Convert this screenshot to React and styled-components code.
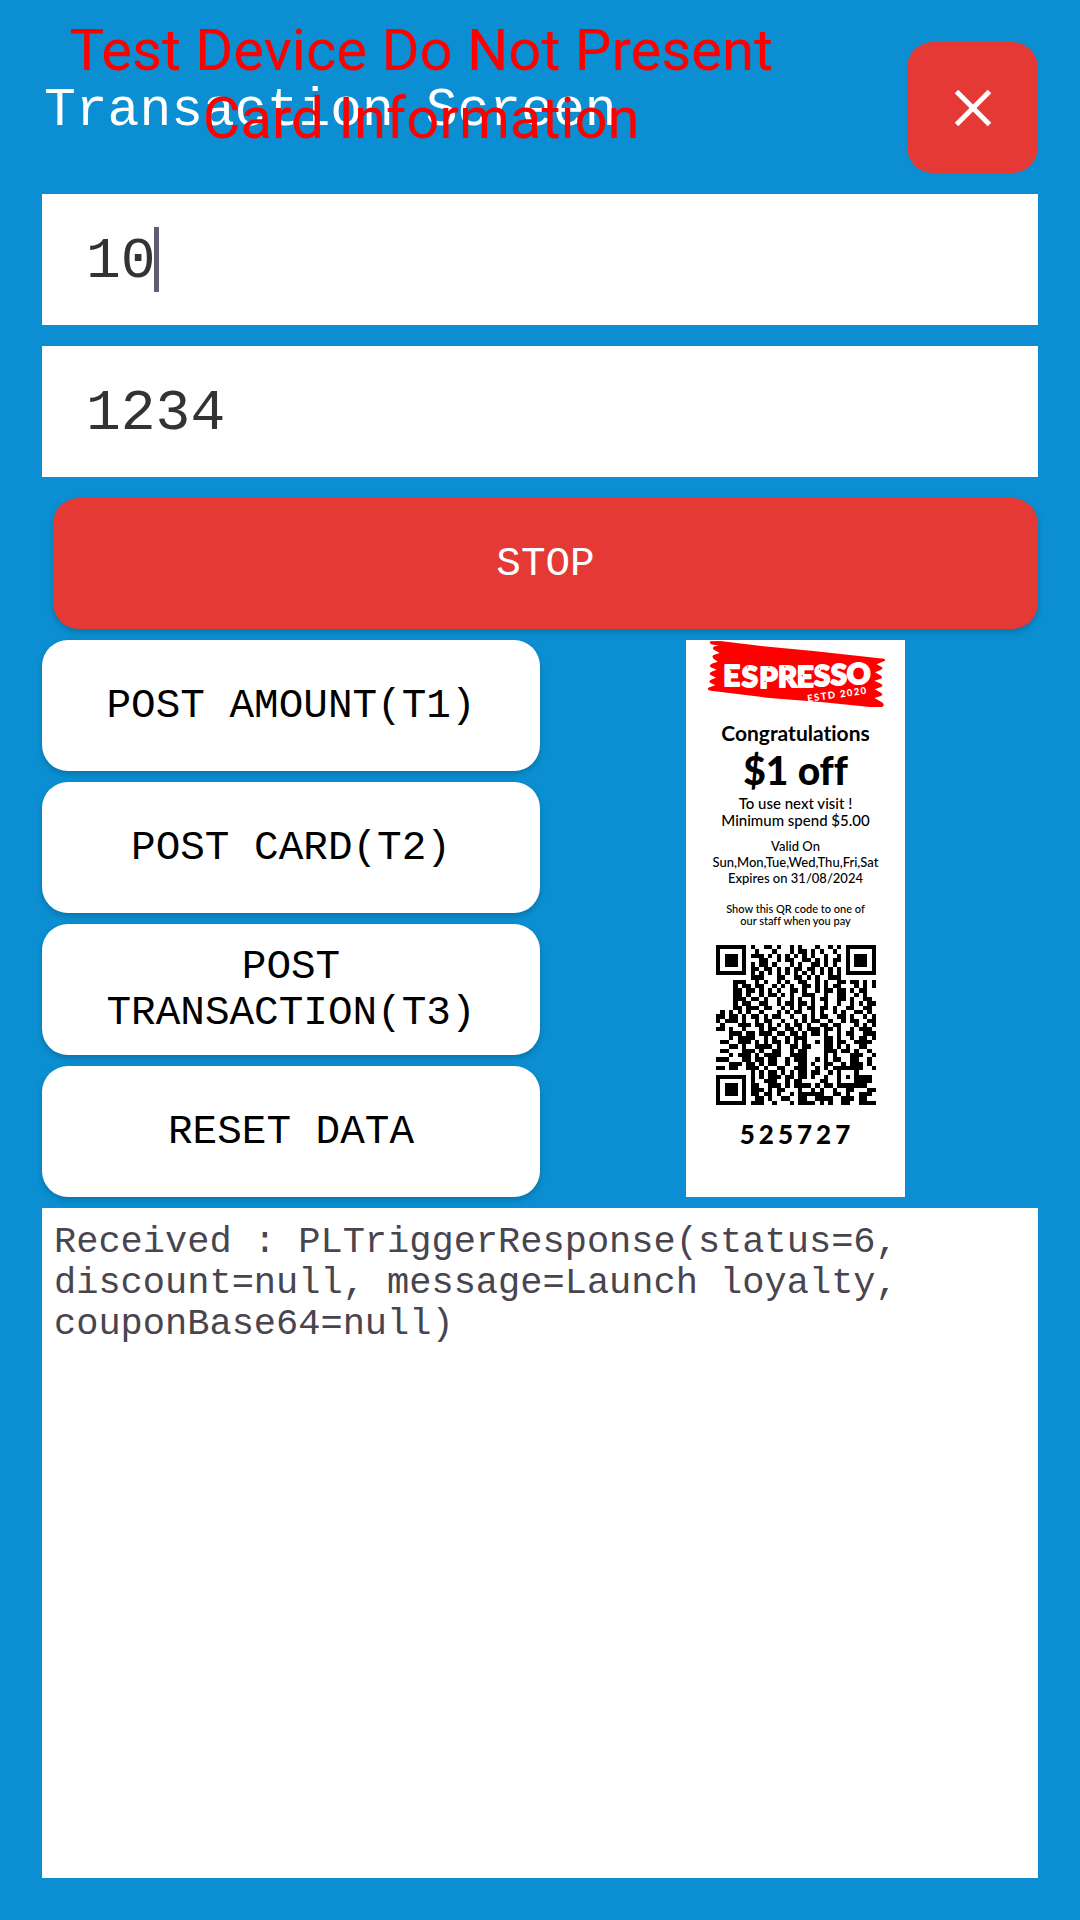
import React from "react";
import styled, { createGlobalStyle } from "styled-components";

const mono = `"Liberation Mono", "Courier New", monospace`;
const blue = "#0b8fd2";
const red = "#e53935";

const GlobalStyle = createGlobalStyle`
  *, *::before, *::after { box-sizing: border-box; }
  body { margin: 0; background: ${blue}; }
  h1, h2, p { margin: 0; font-weight: 400; }
  button, input { font: inherit; border: 0; outline: 0; }
`;

const Screen = styled.main`
  position: relative;
  display: flex;
  flex-direction: column;
  gap: 11px;
  min-height: 100vh;
  padding: 42px;
  background: ${blue};
  font-family: ${mono};
`;

const Watermark = styled.p`
  position: absolute;
  top: 16px;
  left: 0;
  width: 78%;
  padding: 0 40px;
  color: #ff0000;
  font-family: Roboto, sans-serif;
  font-size: 58px;
  line-height: 68px;
  text-align: center;
  pointer-events: none;
`;

const Form = styled.form`
  display: flex;
  flex-direction: column;
  gap: 21px;
`;

const Header = styled.header`
  display: flex;
  align-items: center;
  justify-content: space-between;
`;

const Title = styled.h1`
  padding: 6px 0 0 2px;
  color: #fff;
  font-size: 53px;
  line-height: 60px;
`;

const CloseButton = styled.button`
  display: grid;
  place-items: center;
  width: 131px;
  height: 131px;
  padding: 0;
  border-radius: 26px;
  background: ${red};
  color: #fff;
`;

const Field = styled.div`
  position: relative;
  font-size: 58px;
`;

const TextInput = styled.input`
  display: block;
  width: 100%;
  height: 131px;
  padding: 4px 44px 0;
  border-radius: 0;
  background: #fff;
  color: #333;
  caret-color: transparent;
`;

const Caret = styled.span`
  position: absolute;
  top: 33px;
  left: calc(42px + 2ch);
  width: 5px;
  height: 65px;
  background: #625b71;
`;

const ActionButton = styled.button`
  height: 131px;
  padding: 0 60px;
  margin-left: ${(p) => (p.$stop ? "11px" : "0")};
  border-radius: 26px;
  background: ${(p) => (p.$stop ? red : "#fff")};
  color: ${(p) => (p.$stop ? "#fff" : "#000")};
  box-shadow: 0 3px 6px rgba(0, 0, 0, 0.2);
  font-size: 41px;
  line-height: 46px;
`;

const Middle = styled.div`
  display: grid;
  grid-template-columns: 1fr 1fr;
`;

const Actions = styled.div`
  display: flex;
  flex-direction: column;
  gap: 11px;
`;

const CouponCell = styled.div`
  display: flex;
  justify-content: center;
  padding-left: 13px;
`;

const Coupon = styled.section`
  display: flex;
  flex-direction: column;
  align-items: center;
  width: 219px;
  background: #fff;
  color: #000;
  font-family: Lato, sans-serif;
  font-variant-ligatures: none;
  text-align: center;
  white-space: nowrap;
`;

const Congrats = styled.h2`
  margin-top: 12px;
  font-size: 21px;
  font-weight: 700;
  line-height: 24px;
`;

const Offer = styled.p`
  font-size: 39px;
  font-weight: 900;
  line-height: 50px;
`;

const Lines = styled.p`
  margin-bottom: ${(p) => p.$after}px;
  font-size: ${(p) => p.$size}px;
  font-weight: 500;
  line-height: ${(p) => p.$line}px;
`;

const Code = styled.p`
  margin-top: 14px;
  padding-left: 3px;
  font-size: 26px;
  font-weight: 900;
  line-height: 30px;
  letter-spacing: 4px;
`;

const Log = styled.section`
  flex: 1;
  padding: 14px 12px;
  background: #fff;
  color: #49454f;
  font-size: 37px;
  line-height: 41px;
`;

const CloseIcon = () => (
  <svg width="38" height="38" viewBox="0 0 38 38" aria-hidden="true">
    <path d="M2.5 2.5 35.5 35.5M35.5 2.5 2.5 35.5" stroke="currentColor" strokeWidth="5" />
  </svg>
);

const Logo = () => (
  <svg width="180" height="69" viewBox="78 30 540 207" role="img" aria-label="Espresso">
    <path
      fill="#ff0000"
      d="M92 34 L120 33 L250 49 L400 63 L612 86 Q622 91 606 96 L590 103 L606 112 Q611 116 600 121 L585 127 L603 137 Q611 143 600 147 L583 152 L604 162 Q612 168 601 172 L584 178 L603 188 Q612 194 602 198 L583 204 L606 217 Q617 226 606 231 L570 231 L430 217 L260 203 L92 182 Q77 178 88 172 L106 166 L91 158 Q84 154 93 149 L108 143 L92 135 Q85 130 95 125 L110 119 L92 112 Q86 107 95 101 L113 95 L101 86 Q93 78 103 74 L119 69 L102 59 Q94 54 104 49 L117 47 L94 43 Q86 38 92 34Z"
    />
    <g fill="#fff" fontFamily="Lato, sans-serif" fontWeight="900">
      <text
        fontSize="88"
        stroke="#fff"
        strokeWidth="6"
        strokeLinejoin="round"
        x="130 185 238 294 350 402 452 500"
        y="168 171 173 171 172 168 165 162"
      >
        ESPRESSO
      </text>
      <text fontSize="29" letterSpacing="4" transform="rotate(-8 383 214)" x="383" y="216">
        ESTD 2020
      </text>
    </g>
    <g fill="#ff0000">
      <circle cx="151" cy="119" r="2" />
      <circle cx="203" cy="111" r="2" />
      <circle cx="216" cy="151" r="2" />
      <circle cx="267" cy="111" r="2" />
      <circle cx="255" cy="154" r="2" />
      <circle cx="315" cy="111" r="2" />
      <circle cx="327" cy="150" r="2" />
      <circle cx="367" cy="137" r="2" />
      <circle cx="418" cy="117" r="2" />
      <circle cx="475" cy="151" r="2" />
      <circle cx="545" cy="120" r="2" />
    </g>
  </svg>
);

// 37 x 37 modules; "#" is dark.
const QR = [
  "#######.#..##.#..#.#...#..#.##.######",
  "#.....#..#...#...#.##.#.#..#...#.....",
  "#.###.#.###.#.#.#.#.#.#..#..#..#.###.",
  "#.###.#...##..#.##..##.#.#.##..#.###.",
  "#.###.#.#.##.#...#.#..##.#.#...#.###.",
  "#.....#.##.##.#.#.##.##.#.#.#..#.....",
  "#######.#.#.#.#.#.#.#.#.#.#.#.#######",
  "........###...##..##.#.#..###........",
  "....###..#.#..#.#..##..#.#..##.##.#.#",
  "....#.##.##..#.#.#..##.#.#.##...#.#.#",
  "....##.##.#.#.#..##.#..#.##.##.#.##..",
  "....##.#..#.##.#.#..###..#..##..#.#..",
  "....###.##.#..#..#.#..#.##..##.#..##.",
  "....#.##..##..#.##.##.#..#..#..#.#.##",
  "....##.###.##..#.#.#.##.##.#..##..##.",
  ".#.#.#.#..#...#.#.##..#.#..#.#..##.#.",
  "##.##.#.##.#.##..#..#.#.##..##.#..#.#",
  "#.###.#..#.##..#..#.#.##..#..#.##..##",
  ".#...###.##.#.#.#.##.#..##.##...#.#.#",
  "##.#..#...#.##..##.#.###.##.#..#.###.",
  "...###.##.###.##.##.#.##.#..#.##..###",
  "...#.####..#.#..#.###....##.#..#.##.#",
  ".##..###.#.#.##.#.#.#..#.##.##..####.",
  "...##.#..####.#..##.##...##.#.#..##..",
  ".##...###.#..##..#.##....###.##.#..#.",
  "...#.###.#.####..####....#.#...###..#",
  "###...##.##.##..#.###..#.#.##..##..#.",
  "...###.##.#.##..#..##.#..##..#.###.#.",
  "##.##..###.#..##..###..#.#.##.#.##..#",
  "........#.#.##.#.#.##.##..#.#.#......",
  "#######.#.#.###.##.##.#..#..#...####.",
  "#.....#.#..###..#.##....##..#...####.",
  "#.###.#.##..###.#.####.#.##.#######..",
  "#.###.#.###.#.##...#..#.#..#..##...##",
  "#.###.#.##.##.#..#.######..##.#..###.",
  "#.....#..##.#..##..##..####..###.##..",
  "#######.###..#...#.####.#.#..##..####",
];

// The three corner finders and the alignment mark, as [column, row, size].
const MARKS = [
  [0, 0, 7],
  [30, 0, 7],
  [0, 30, 7],
  [28, 28, 5],
];

const QrCode = () => {
  let d = "";
  QR.forEach((row, y) => {
    [...row].forEach((cell, x) => {
      if (cell === "#") d += `M${x} ${y}h1v1h-1z`;
    });
  });
  return (
    <svg width="160" height="160" viewBox="0 0 37 37" shapeRendering="crispEdges" role="img" aria-label="QR code">
      <path d={d} fill="#000" />
      <path d="M29 0h1v8h-1zM29 7h8v1h-8zM0 29h8v1h-8z" fill="#fff" />
      {MARKS.map(([x, y, s]) => (
        <g key={`${x}-${y}`}>
          <rect x={x} y={y} width={s} height={s} fill="#000" />
          <rect x={x + 1} y={y + 1} width={s - 2} height={s - 2} fill="#fff" />
          <rect x={x + 2} y={y + 2} width={s - 4} height={s - 4} fill="#000" />
        </g>
      ))}
    </svg>
  );
};

export default function App() {
  return (
    <>
      <GlobalStyle />
      <Screen>
        <Form onSubmit={(e) => e.preventDefault()}>
          <Header>
            <Title>Transaction Screen</Title>
            <CloseButton type="button" aria-label="Close">
              <CloseIcon />
            </CloseButton>
          </Header>
          <Field>
            <TextInput aria-label="Amount" inputMode="decimal" defaultValue="10" />
            <Caret />
          </Field>
          <Field>
            <TextInput aria-label="Card number" inputMode="numeric" defaultValue="1234" />
          </Field>
          <ActionButton type="submit" $stop>
            STOP
          </ActionButton>
        </Form>

        <Middle>
          <Actions>
            <ActionButton>POST AMOUNT(T1)</ActionButton>
            <ActionButton>POST CARD(T2)</ActionButton>
            <ActionButton>POST TRANSACTION(T3)</ActionButton>
            <ActionButton>RESET DATA</ActionButton>
          </Actions>
          <CouponCell>
            <Coupon>
              <Logo />
              <Congrats>Congratulations</Congrats>
              <Offer>$1 off</Offer>
              <Lines $size={15} $line={17} $after={9}>
                To use next visit !
                <br />
                Minimum spend $5.00
              </Lines>
              <Lines $size={13} $line={16} $after={17}>
                Valid On
                <br />
                Sun,Mon,Tue,Wed,Thu,Fri,Sat
                <br />
                Expires on 31/08/2024
              </Lines>
              <Lines $size={11} $line={12} $after={18}>
                Show this QR code to one of
                <br />
                our staff when you pay
              </Lines>
              <QrCode />
              <Code>525727</Code>
            </Coupon>
          </CouponCell>
        </Middle>

        <Log aria-label="Log">
          <p>Received : PLTriggerResponse(status=6, discount=null, message=Launch loyalty, couponBase64=null)</p>
        </Log>
        <Watermark>Test Device Do Not Present Card Information</Watermark>
      </Screen>
    </>
  );
}
